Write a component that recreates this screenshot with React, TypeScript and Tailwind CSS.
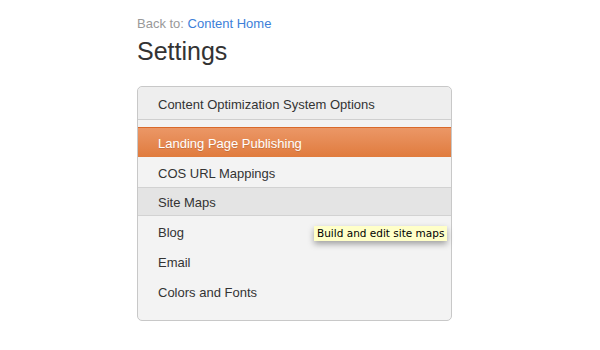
import React from "react";

const items = [
  { label: "Landing Page Publishing", state: "active" },
  { label: "COS URL Mappings", state: "" },
  { label: "Site Maps", state: "hover" },
  { label: "Blog", state: "" },
  { label: "Email", state: "" },
  { label: "Colors and Fonts", state: "" },
];

export default function App() {
  return (
    <div className="w-[600px] h-[350px] bg-white font-['Liberation_Sans',Arial,sans-serif] text-[#333]">
      <div className="pl-[137px] pt-[16px]">
        <div className="text-[13px] leading-[16px] text-[#999]">
          Back to: <a className="text-[#3d7fd9]">Content Home</a>
        </div>
        <h1 className="mt-[4px] text-[25px] leading-[30px] text-[#333]">Settings</h1>

        <div className="relative mt-[20px] w-[315px] h-[235px] border border-[#c8c8c8] rounded-[5px] bg-[#f3f3f3]">
          <div className="h-[33px] flex items-center pl-[20px] pt-[3px] bg-[#eeeeee] rounded-t-[5px] border-b border-[#cfcfcf] text-[13px]">
            Content Optimization System Options
          </div>
          <div className="h-[7px]" />
          {items.map((item) => (
            <div
              key={item.label}
              className={
                item.state === "active"
                  ? "h-[30px] flex items-center pl-[20px] pt-[2px] text-[13px] text-white border-t border-[#d9692a] bg-gradient-to-b from-[#eb9766] to-[#e07b3d] [text-shadow:0_1px_0_rgba(0,0,0,0.15)]"
                  : item.state === "hover"
                  ? "h-[29px] flex items-center pl-[20px] pt-[2px] text-[13px] bg-[#e4e4e4] border-t border-b border-[#d2d2d2]"
                  : "h-[30px] flex items-center pl-[20px] pt-[3px] text-[13px]"
              }
            >
              {item.label}
            </div>
          ))}

          <div className="absolute left-[176px] top-[139px] px-[3px] py-[1px] bg-[#ffffc8] text-[10.5px] leading-[13px] text-black font-['DejaVu_Sans',sans-serif] shadow-[0_3px_6px_rgba(0,0,0,0.35)] whitespace-nowrap">
            Build and edit site maps
          </div>
        </div>
      </div>
    </div>
  );
}
